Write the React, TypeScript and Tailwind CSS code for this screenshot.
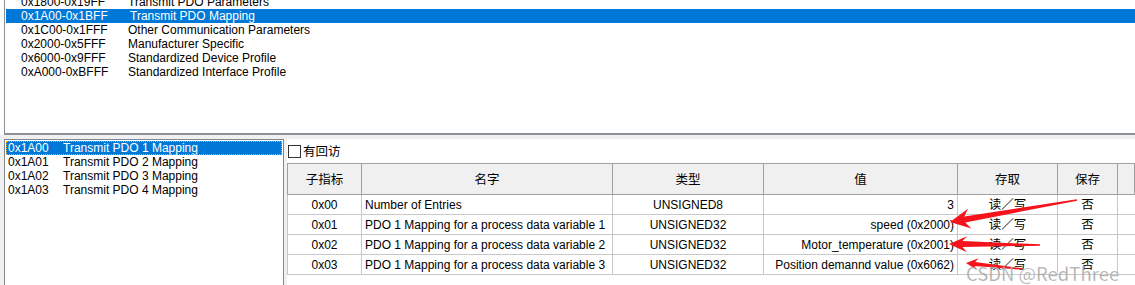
import React from "react";

const topRows = [
  { range: "0x1800-0x19FF", name: "Transmit PDO Parameters" },
  { range: "0x1A00-0x1BFF", name: "Transmit PDO Mapping", selected: true },
  { range: "0x1C00-0x1FFF", name: "Other Communication Parameters" },
  { range: "0x2000-0x5FFF", name: "Manufacturer Specific" },
  { range: "0x6000-0x9FFF", name: "Standardized Device Profile" },
  { range: "0xA000-0xBFFF", name: "Standardized Interface Profile" },
];

const pdoList = [
  { index: "0x1A00", name: "Transmit PDO 1 Mapping" },
  { index: "0x1A01", name: "Transmit PDO 2 Mapping" },
  { index: "0x1A02", name: "Transmit PDO 3 Mapping" },
  { index: "0x1A03", name: "Transmit PDO 4 Mapping" },
];

const entries = [
  { sub: "0x00", name: "Number of Entries", type: "UNSIGNED8", value: "3" },
  { sub: "0x01", name: "PDO 1 Mapping for a process data variable 1", type: "UNSIGNED32", value: "speed (0x2000)" },
  { sub: "0x02", name: "PDO 1 Mapping for a process data variable 2", type: "UNSIGNED32", value: "Motor_temperature (0x2001)" },
  { sub: "0x03", name: "PDO 1 Mapping for a process data variable 3", type: "UNSIGNED32", value: "Position demannd value (0x6062)" },
];

const headers = ["子指标", "名字", "类型", "值", "存取", "保存", ""];

const sans = "font-['Liberation_Sans','Noto_Sans_CJK_SC',sans-serif]";
const cjk = "font-['Noto_Sans_CJK_SC',sans-serif]";

// tapering red arrow, computed from tip and tail
const arrowPoints = (tip: [number, number], tail: [number, number], head = 20, wing = 10, shaft = 3) => {
  const dx = tail[0] - tip[0];
  const dy = tail[1] - tip[1];
  const len = Math.hypot(dx, dy);
  const ux = dx / len;
  const uy = dy / len;
  const nx = -uy;
  const ny = ux;
  const b = [tip[0] + ux * head, tip[1] + uy * head];
  const j = [tip[0] + ux * head * 0.75, tip[1] + uy * head * 0.75];
  const pts = [
    tip,
    [b[0] + nx * wing, b[1] + ny * wing],
    [j[0] + nx * shaft, j[1] + ny * shaft],
    [tail[0] + nx * 0.7, tail[1] + ny * 0.7],
    [tail[0] - nx * 0.7, tail[1] - ny * 0.7],
    [j[0] - nx * shaft, j[1] - ny * shaft],
    [b[0] - nx * wing, b[1] - ny * wing],
  ];
  return pts.map((p) => `${p[0].toFixed(1)},${p[1].toFixed(1)}`).join(" ");
};

const App = () => {
  return (
    <div className={`relative w-[1135px] h-[285px] overflow-hidden bg-white flex flex-col ${sans}`}>
      {/* object dictionary ranges */}
      <div className="h-[135px] shrink-0 ml-[4px] border-l border-b-2 border-[#8d9296] overflow-hidden">
        <ul className="-mt-[5px] pl-[1px]">
          {topRows.map((row, i) => (
            <li
              key={i}
              className={`flex h-[14px] items-center text-[12px] leading-[14px] ${
                row.selected ? "bg-[#0078d7] text-white" : "text-black"
              }`}
            >
              <span className="w-[122px] pl-[15px]">{row.range}</span>
              <span className={row.selected ? "pl-[2px]" : ""}>{row.name}</span>
            </li>
          ))}
        </ul>
      </div>

      <div className="flex-1 flex bg-[#f0f0f0] pt-[4px]">
        {/* mapping list */}
        <div className="ml-[4px] w-[280px] bg-white border border-b-0 border-[#828790] pt-px px-px">
          {pdoList.map((item, i) => (
            <div
              key={i}
              className={`flex h-[14px] items-center text-[12px] leading-[14px] ${
                i === 0 ? "bg-[#0078d7] text-white outline-1 outline-dotted outline-[#f5a623] -outline-offset-1" : "text-black"
              }`}
            >
              <span className="w-[57px] pl-[2px]">{item.index}</span>
              <span>{item.name}</span>
            </div>
          ))}
        </div>

        {/* sub-index table */}
        <div className="ml-[3px] flex-1 bg-white flex flex-col">
          <label className="flex items-center h-[24px] pl-[1px] gap-[2px]">
            <span className="w-[13px] h-[13px] border border-[#333] bg-white" />
            <span className={`text-[12.5px] text-black ${cjk}`}>有回访</span>
          </label>
          <div className="grid grid-cols-[75px_251px_151px_194px_100px_60px_1fr] border-t border-[#a0a0a0]">
            {headers.map((h, i) => (
              <div
                key={i}
                className={`h-[31px] flex items-center justify-center bg-[#f0f0f0] border-r border-b border-[#a0a0a0] text-[12.5px] text-black ${cjk} ${
                  i === 0 ? "border-l" : ""
                }`}
              >
                {h}
              </div>
            ))}
            {entries.map((e, i) => (
              <React.Fragment key={i}>
                <div className="h-[20px] flex items-center justify-center border-l border-r border-b border-[#c8c8c8] text-[12px] text-black">
                  {e.sub}
                </div>
                <div className="h-[20px] flex items-center pl-[3px] border-r border-b border-[#c8c8c8] text-[12px] text-black whitespace-nowrap">
                  {e.name}
                </div>
                <div className="h-[20px] flex items-center justify-center border-r border-b border-[#c8c8c8] text-[12px] text-black">
                  {e.type}
                </div>
                <div className="h-[20px] flex items-center justify-end pr-[3px] border-r border-b border-[#c8c8c8] text-[12px] text-black whitespace-nowrap">
                  {e.value}
                </div>
                <div className={`h-[20px] flex items-center justify-center border-r border-b border-[#c8c8c8] text-[12.5px] text-black ${cjk}`}>
                  读／写
                </div>
                <div className={`h-[20px] flex items-center justify-center border-r border-b border-[#c8c8c8] text-[12.5px] text-black ${cjk}`}>
                  否
                </div>
                <div className="h-[20px] border-b border-[#c8c8c8]" />
              </React.Fragment>
            ))}
          </div>
        </div>
      </div>

      {/* annotations */}
      <svg className="absolute inset-0 pointer-events-none" width={1135} height={285}>
        <polygon points={arrowPoints([950, 222], [1077, 200], 20, 10, 3)} fill="#f5141b" />
        <polygon points={arrowPoints([949, 244], [1040, 245], 18, 8, 3)} fill="#f5141b" />
        <polygon points={arrowPoints([966, 263], [1022, 269], 12, 6, 2)} fill="#f5141b" />
        <text
          x={966}
          y={281}
          fontSize={18.5}
          fill="#8c8c8c"
          fillOpacity={0.75}
          stroke="#ffffff"
          strokeOpacity={0.5}
          strokeWidth={0.5}
          fontFamily="'Noto Sans CJK SC', 'Noto Sans', sans-serif"
        >
          CSDN @RedThree
        </text>
      </svg>
    </div>
  );
};

export default App;
